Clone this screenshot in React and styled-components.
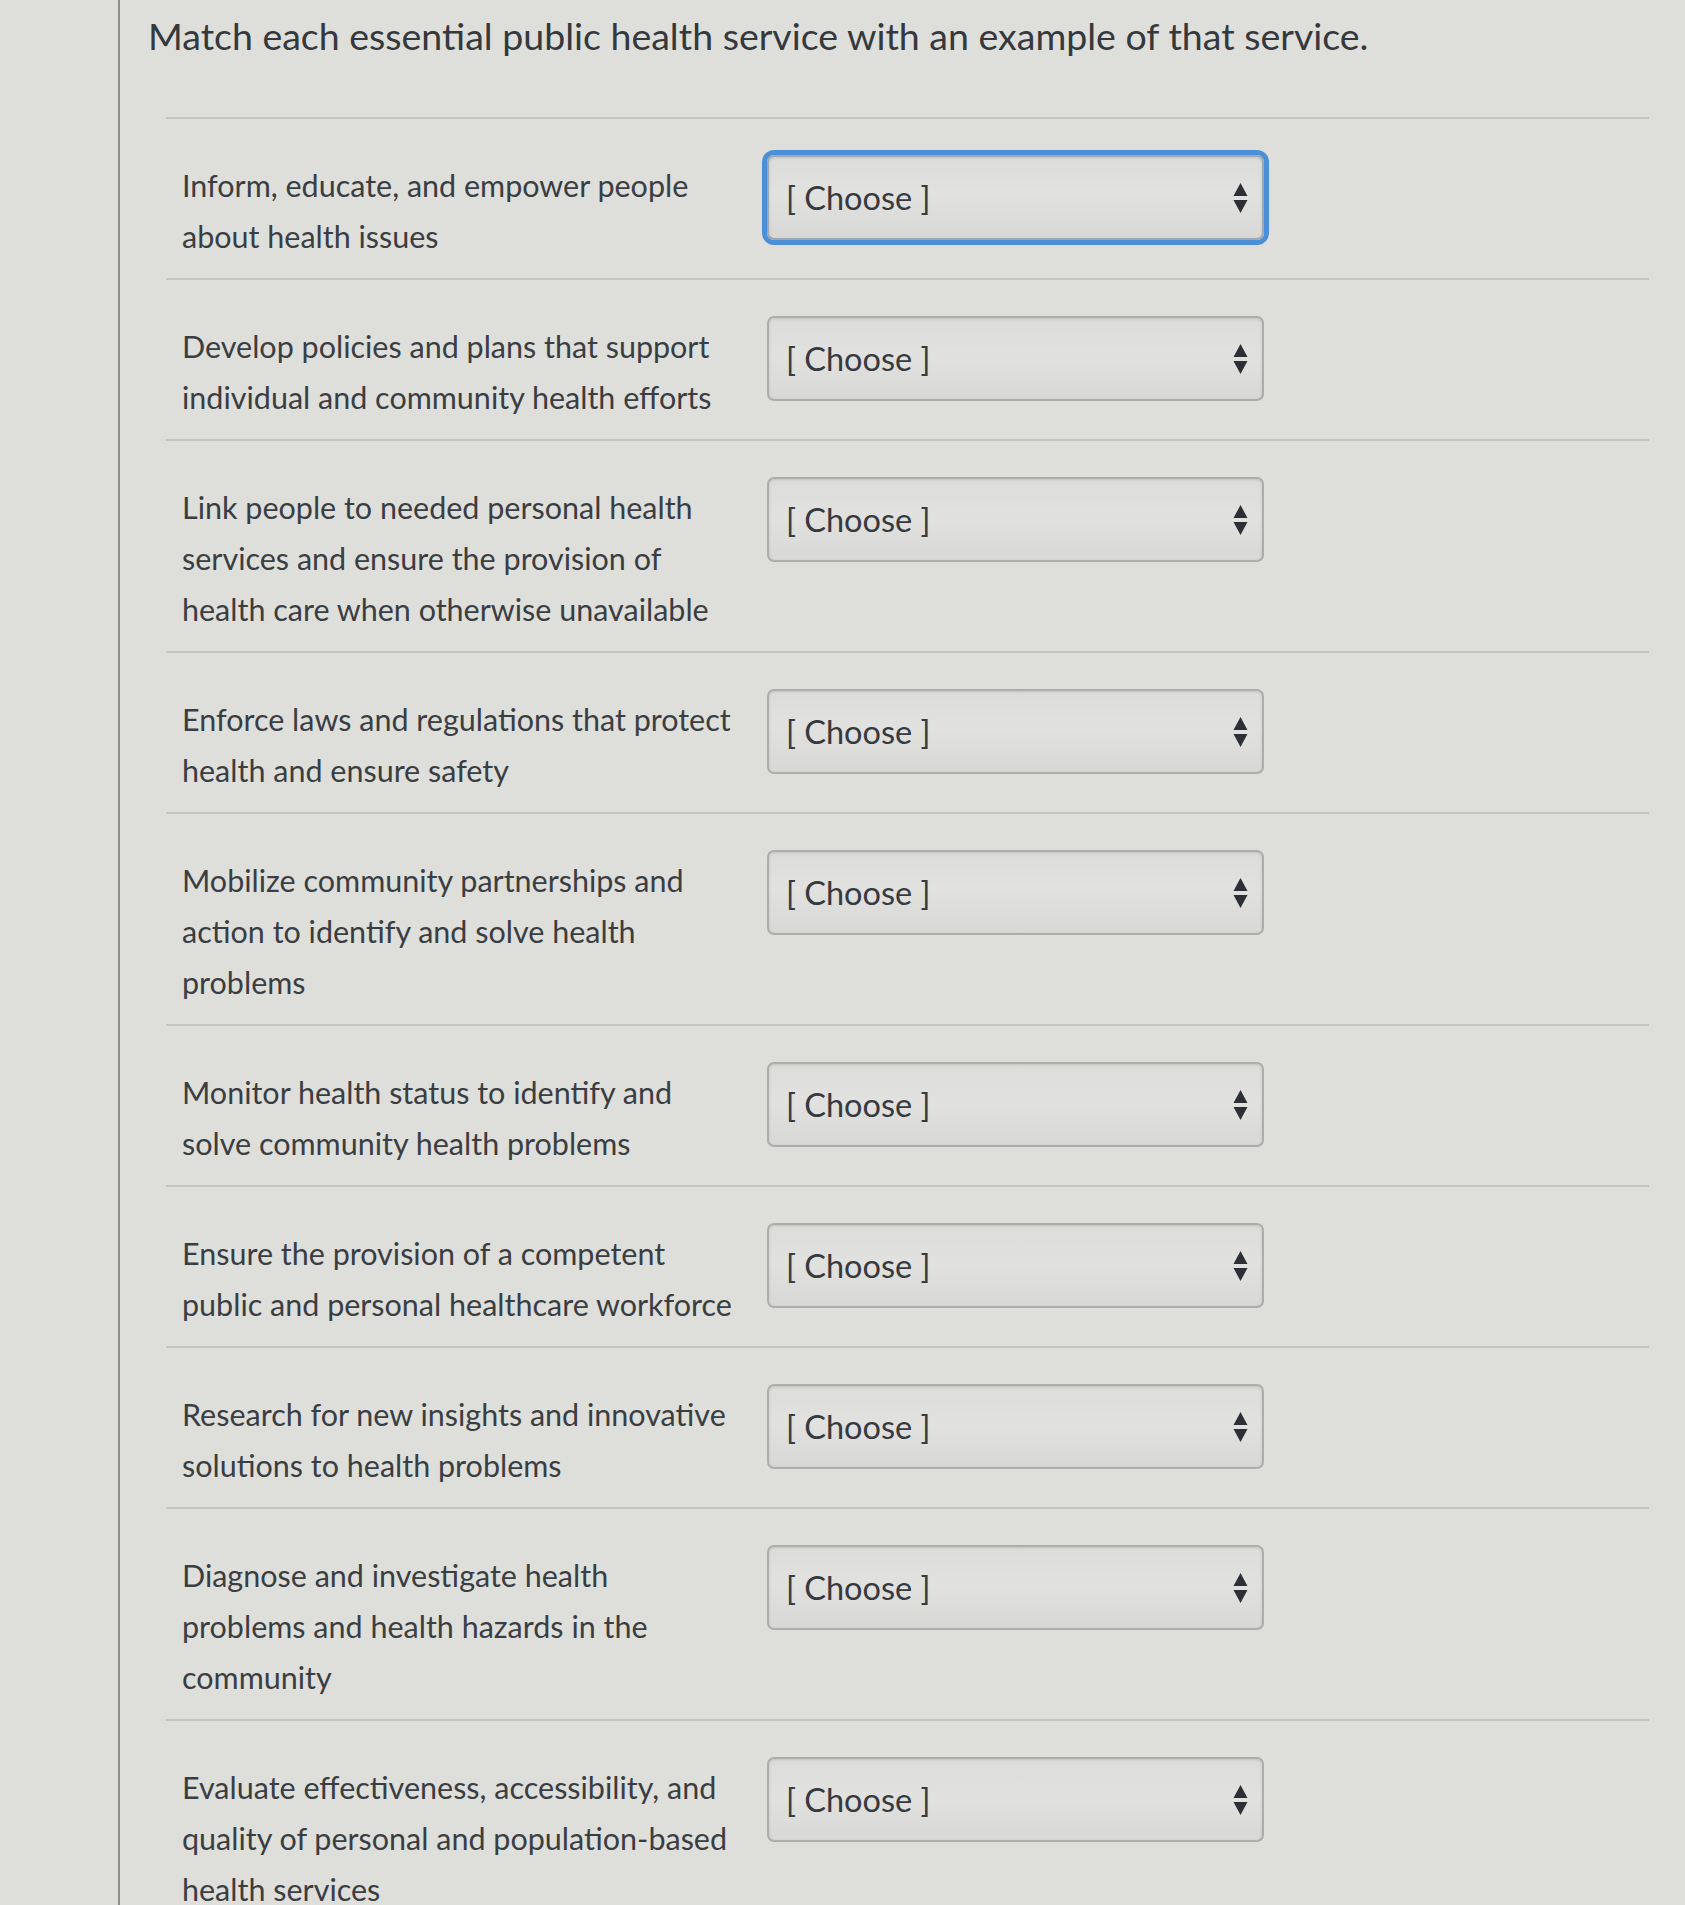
import React from 'react';
import styled, { createGlobalStyle } from 'styled-components';

const GlobalStyle = createGlobalStyle`
  html, body {
    margin: 0;
    padding: 0;
    background: #dedfdb;
  }
  body {
    font-family: Lato, "Open Sans", sans-serif;
    color: #3b3e43;
  }
`;

/* each statement, split the way the quiz wraps it */
const statements = [
  ['Inform, educate, and empower people', 'about health issues'],
  ['Develop policies and plans that support', 'individual and community health efforts'],
  ['Link people to needed personal health', 'services and ensure the provision of', 'health care when otherwise unavailable'],
  ['Enforce laws and regulations that protect', 'health and ensure safety'],
  ['Mobilize community partnerships and', 'action to identify and solve health', 'problems'],
  ['Monitor health status to identify and', 'solve community health problems'],
  ['Ensure the provision of a competent', 'public and personal healthcare workforce'],
  ['Research for new insights and innovative', 'solutions to health problems'],
  ['Diagnose and investigate health', 'problems and health hazards in the', 'community'],
  ['Evaluate effectiveness, accessibility, and', 'quality of personal and population-based', 'health services'],
];

/**
 * Up / down carets of the select
 */
const SortArrows = () => (
  <svg width="15" height="32" viewBox="0 0 15 32">
    <path d="M7.5 1 L14.5 14 L0.5 14 Z" fill="#2c2f33" />
    <path d="M0.5 18 L14.5 18 L7.5 31 Z" fill="#2c2f33" />
  </svg>
);

const Choose = ({ focused }) => (
  <SelectBox focused={focused}>
    <SelectText>[ Choose ]</SelectText>
    <SortArrows />
  </SelectBox>
);

const Row = ({ lines, focused }) => (
  <MatchRow>
    <Label>
      {lines.map((l, i) => (
        <Line key={i}>{l}</Line>
      ))}
    </Label>
    <Choose focused={focused} />
  </MatchRow>
);

export default function App() {
  return (
    <Page>
      <GlobalStyle />
      <Gutter />
      <Content>
        <Title>Match each essential public health service with an example of that service.</Title>
        <List>
          {statements.map((s, i) => (
            <Row key={i} lines={s} focused={i === 0} />
          ))}
        </List>
      </Content>
    </Page>
  );
}

const Page = styled.div`
  display: flex;
  min-height: 1905px;
  width: 1685px;
  overflow: hidden;
`;

const Gutter = styled.aside`
  width: 118px;
  flex-shrink: 0;
  background: #dfe0dc;
  border-right: 2px solid #8e8e8c;
`;

const Content = styled.main`
  flex: 1;
  min-width: 0;
`;

const Title = styled.h1`
  margin: 13px 0 0 28px;
  font-size: 37.5px;
  line-height: 46px;
  font-weight: 400;
  white-space: nowrap;
  color: #35383c;
`;

const List = styled.section`
  margin: 58px 36px 0 46px;
`;

const MatchRow = styled.div`
  display: flex;
  align-items: flex-start;
  border-top: 2px solid #c4c4c2;
  padding: 36px 0 16px 16px;
`;

const Label = styled.div`
  width: 585px;
  flex-shrink: 0;
  margin-top: 5px;
  font-size: 30.5px;
  line-height: 51px;
  color: #3a3d42;
`;

const Line = styled.span`
  display: block;
  white-space: nowrap;
`;

const SelectBox = styled.div`
  display: flex;
  align-items: center;
  justify-content: space-between;
  box-sizing: border-box;
  width: 497px;
  height: 85px;
  padding: 0 14px 0 17px;
  border: 2px solid #adadab;
  border-radius: 7px;
  background: linear-gradient(180deg, #dcdcda 0%, #e1e1df 45%, #d8d8d6 100%);
  box-shadow: inset 0 1px 3px rgba(0, 0, 0, 0.12);
  ${props => props.focused && `
    border-color: #9ea8b2;
    box-shadow: 0 0 0 5px #4b8fd8, inset 0 1px 3px rgba(0, 0, 0, 0.12);
  `}
`;

const SelectText = styled.span`
  font-size: 32.5px;
  color: #363a3f;
`;
